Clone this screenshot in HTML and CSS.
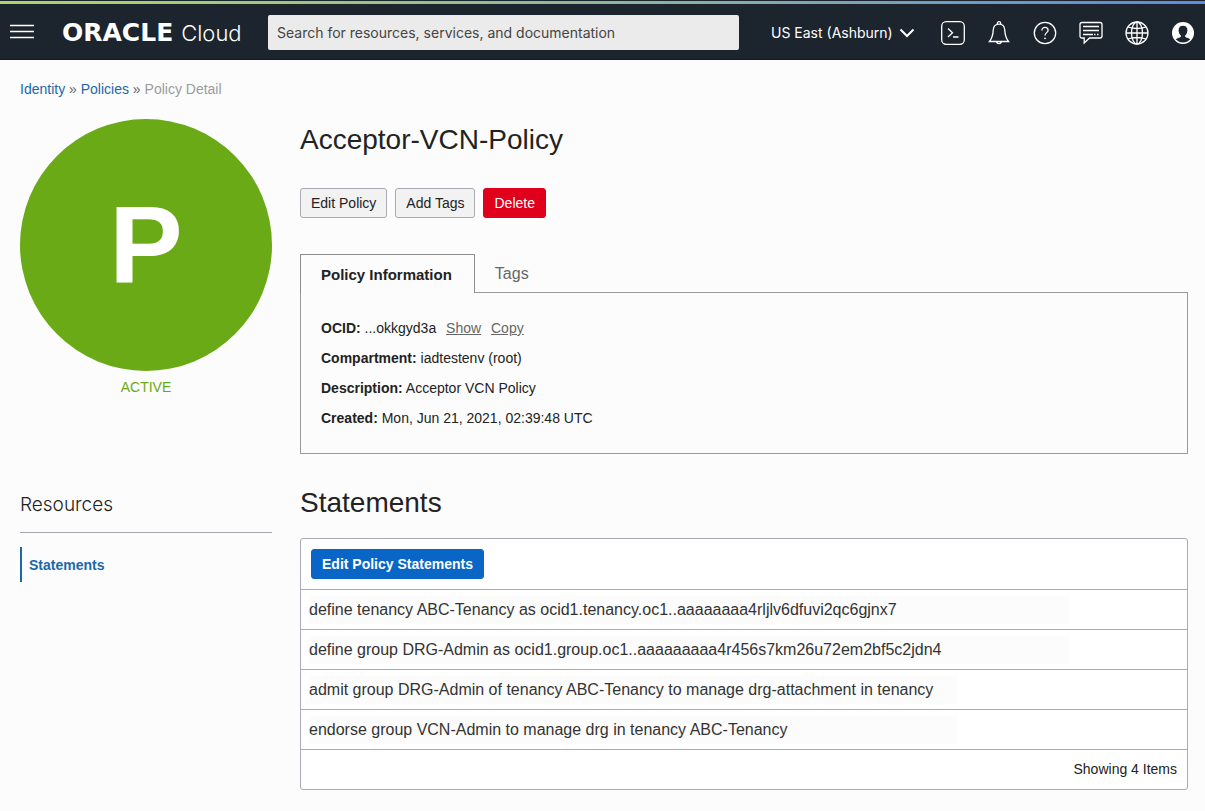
FILE: index.html
```html
<!DOCTYPE html>
<html lang="en">
<head>
    <meta charset="UTF-8">
    <meta name="viewport" content="width=device-width, initial-scale=1.0">
    <title>Policy Detail</title>
    <link rel="stylesheet" href="styles.css">
</head>
<body>
<header class="topbar">
    <button class="icon-button" aria-label="Menu">
        <svg width="24" height="24" viewBox="0 0 24 24"><path d="M0 4.500h24M0 10.500h24M0 16.500h24"/></svg>
    </button>
    <a class="brand" href="#"><span class="brand-name">ORACLE</span><span class="brand-product">Cloud</span></a>
    <input class="search" type="search" aria-label="Search" placeholder="Search for resources, services, and documentation">
    <div class="region">
        <select class="region-select" aria-label="Region">
            <option>US East (Ashburn)</option>
        </select>
        <svg class="chevron" width="16" height="10" viewBox="0 0 16 10"><path d="M1.500 1.500l6.500 6.500 6.500-6.500"/></svg>
    </div>
    <nav class="tools">
        <button class="icon-button" aria-label="Cloud Shell">
            <svg width="24" height="24" viewBox="0 0 24 24"><rect x="0.700" y="0.700" width="22.600" height="22.600" rx="4.500"/><path d="M7 7.500l4.500 4.200L7 16M12 16h5.500"/></svg>
        </button>
        <button class="icon-button" aria-label="Notifications">
            <svg width="24" height="24" viewBox="0 0 24 24"><path d="M10.300 3.200V2.400a1.700 1.700 0 0 1 3.400 0v.8M12 3.200c-3.700 0-5.600 2.600-5.800 6-.2 5-1.200 8-3.700 11.300h19c-2.500-3.300-3.500-6.300-3.700-11.300-.2-3.400-2.100-6-5.800-6zM9.500 20.700a2.600 2.600 0 0 0 5 0"/></svg>
        </button>
        <button class="icon-button" aria-label="Help">
            <svg width="24" height="24" viewBox="0 0 24 24"><circle cx="12" cy="12" r="10.700"/><path d="M8.900 9.400c0-1.900 1.300-3.100 3.100-3.100s3.100 1.200 3.100 2.900c0 2.400-3.100 2.500-3.100 5.300"/><circle class="fill" cx="12" cy="17.300" r="0.900"/></svg>
        </button>
        <button class="icon-button" aria-label="Announcements">
            <svg width="24" height="24" viewBox="0 0 24 24"><path d="M3 1.500h18q2 0 2 2v11.500q0 2-2 2H10.500l-5.300 5v-5H3q-2 0-2-2V3.500q0-2 2-2z"/><path d="M4 5.500h16M4 9.500h16M4 13.500h10M15 13.500h1.500M18 13.500h1.500"/></svg>
        </button>
        <button class="icon-button" aria-label="Language">
            <svg width="24" height="24" viewBox="0 0 24 24"><circle cx="12" cy="12" r="11"/><ellipse cx="12" cy="12" rx="5.500" ry="11"/><path d="M12 1v22M1 12h22M3 6q9 3 18 0M3 18q9-3 18 0"/></svg>
        </button>
        <button class="icon-button" aria-label="Profile">
            <svg width="24" height="24" viewBox="0 0 24 24"><circle class="fill" cx="12" cy="12" r="11"/><path class="cutout" d="M12 4.200c3 0 4.900 2.200 4.900 5 0 2.300-.9 4-2.200 5.100v1.500c2 .6 3.700 1.300 4.800 2.500C17.800 20.700 15 22 12 22s-5.800-1.300-7.500-3.700c1.100-1.200 2.800-1.900 4.800-2.500v-1.500C8 13.200 7.100 11.500 7.100 9.200c0-2.800 1.900-5 4.900-5z"/></svg>
        </button>
    </nav>
</header>

<main class="page">
    <nav class="breadcrumb"><a href="#">Identity</a> » <a href="#">Policies</a> » <span class="current">Policy Detail</span></nav>

    <div class="layout">
        <aside class="sidebar">
            <div class="badge">P</div>
            <div class="status">ACTIVE</div>
            <h2 class="sidebar-title">Resources</h2>
            <a class="sidebar-link" href="#statements">Statements</a>
        </aside>

        <div class="content">
            <h1>Acceptor-VCN-Policy</h1>
            <div class="actions">
                <button class="btn">Edit Policy</button>
                <button class="btn">Add Tags</button>
                <button class="btn btn-danger">Delete</button>
            </div>

            <div class="tabs" role="tablist">
                <button class="tab active" role="tab" aria-selected="true">Policy Information</button>
                <button class="tab" role="tab" aria-selected="false">Tags</button>
            </div>
            <div class="panel">
                <p><strong>OCID:</strong> ...okkgyd3a <a href="#">Show</a> <a href="#">Copy</a></p>
                <p><strong>Compartment:</strong> iadtestenv (root)</p>
                <p><strong>Description:</strong> Acceptor VCN Policy</p>
                <p><strong>Created:</strong> Mon, Jun 21, 2021, 02:39:48 UTC</p>
            </div>

            <h2 class="section-title" id="statements">Statements</h2>
            <div class="card">
                <div class="card-toolbar">
                    <button class="btn btn-primary">Edit Policy Statements</button>
                </div>
                <table class="statements" aria-labelledby="statements">
                    <tbody>
                        <tr><td><span class="statement long">define tenancy ABC-Tenancy as ocid1.tenancy.oc1..aaaaaaaa4rljlv6dfuvi2qc6gjnx7</span></td></tr>
                        <tr><td><span class="statement long">define group DRG-Admin as ocid1.group.oc1..aaaaaaaaa4r456s7km26u72em2bf5c2jdn4</span></td></tr>
                        <tr><td><span class="statement">admit group DRG-Admin of tenancy ABC-Tenancy to manage drg-attachment in tenancy</span></td></tr>
                        <tr><td><span class="statement">endorse group VCN-Admin to manage drg in tenancy ABC-Tenancy</span></td></tr>
                    </tbody>
                </table>
                <div class="card-footer">Showing 4 Items</div>
            </div>
        </div>
    </div>
</main>
</body>
</html>
```
FILE: styles.css
```css
* {
  box-sizing: border-box;
}

body {
  margin: 0;
  background-color: #fcfcfc;
  color: #222;
  font-family: "Liberation Sans", Arial, sans-serif;
  font-size: 14px;
  line-height: 20px;
}

h1, h2, p {
  margin: 0;
  font-weight: normal;
}

button, input, select {
  font-family: inherit;
  font-size: 14px;
}

/* Top bar */
.topbar {
  display: flex;
  align-items: center;
  height: 60px;
  padding: 6px 10px 0;
  background: linear-gradient(90deg, #add66b, #8fb79a 50%, #6089dc) 0 1px / 100% 3px no-repeat, #1c242d;
  border-bottom: 1px solid #151c24;
  color: white;
  font-family: Inter, sans-serif;
}

.icon-button {
  display: block;
  width: 24px;
  height: 24px;
  padding: 0;
  background: none;
  border: none;
  cursor: pointer;
}

.topbar svg {
  display: block;
  fill: none;
  stroke: white;
  stroke-width: 1.3;
}

.topbar .fill {
  fill: white;
  stroke: none;
}

.topbar .cutout {
  fill: #1c242d;
  stroke: white;
  stroke-width: 1;
}

.brand {
  display: flex;
  align-items: center;
  gap: 8px;
  width: 206px;
  margin-left: 28px;
  color: white;
  text-decoration: none;
}

.brand-name {
  font-family: "DejaVu Sans", sans-serif;
  font-size: 25px;
  font-weight: bold;
}

.brand-product {
  font-size: 22px;
  font-weight: 300;
}

.search {
  flex: 1;
  min-width: 0;
  height: 35px;
  padding: 0 9px;
  background-color: #ebebeb;
  border: none;
  border-radius: 2px;
}

.search::placeholder {
  color: #444;
}

.region {
  display: flex;
  align-items: center;
  gap: 6px;
  margin-left: 32px;
}

.region-select {
  appearance: none;
  padding: 0;
  background: none;
  border: none;
  color: white;
}

.topbar .chevron {
  stroke-width: 2;
}

.tools {
  display: flex;
  gap: 22px;
  margin-left: 26px;
}

/* Page */
.page {
  padding: 19px 17px 20px 20px;
}

.breadcrumb {
  color: #666;
}

.breadcrumb a {
  color: #1b68a8;
  text-decoration: none;
}

.breadcrumb .current {
  color: #9b9b9b;
}

.layout {
  display: grid;
  grid-template-columns: 252px 1fr;
  gap: 28px;
  margin-top: 20px;
}

.badge {
  display: flex;
  align-items: center;
  justify-content: center;
  aspect-ratio: 1;
  background-color: #6aaa17;
  border-radius: 50%;
  color: white;
  font-size: 110px;
  font-weight: bold;
}

.status {
  margin-top: 6px;
  color: #6aaa17;
  text-align: center;
}

.sidebar-title {
  margin-top: 98px;
  padding-bottom: 17px;
  border-bottom: 1px solid #a5a8b0;
  font-family: Inter, sans-serif;
  font-size: 19px;
  font-weight: 300;
}

.sidebar-link {
  display: block;
  margin-top: 14px;
  padding: 8px 7px 7px;
  border-left: 2px solid #1b68a8;
  color: #1b68a8;
  font-weight: bold;
  text-decoration: none;
}

h1, .section-title {
  font-size: 28px;
  line-height: 42px;
}

.actions {
  display: flex;
  gap: 8px;
  margin-top: 27px;
}

.btn {
  height: 30px;
  padding: 0 10px;
  background-color: #f2f2f3;
  border: 1px solid #a9abb3;
  border-radius: 3px;
  color: #222;
  cursor: pointer;
}

.btn-danger {
  background-color: #e0001b;
  border-color: #e0001b;
  color: white;
}

.btn-primary {
  background-color: #0a66c6;
  border-color: #0a66c6;
  color: white;
  font-weight: bold;
}

/* Tabs sit on the top border of the panel */
.tabs {
  display: flex;
  margin-top: 36px;
}

.tab {
  height: 39px;
  padding: 0 20px;
  background: none;
  border: none;
  color: #666;
  font-size: 16px;
  cursor: pointer;
}

.tab.active {
  position: relative;
  padding-right: 22px;
  background-color: #fcfcfc;
  border: 1px solid #8c8c8c;
  border-bottom: none;
  color: #222;
  font-size: 15px;
  font-weight: bold;
}

.panel {
  margin-top: -1px;
  padding: 20px;
  border: 1px solid #9b9b9b;
  line-height: 30px;
}

.panel a {
  margin-left: 6px;
  color: #666;
}

.section-title {
  margin-top: 28px;
}

.card {
  margin-top: 14px;
  background-color: white;
  border: 1px solid #a9abb3;
  border-radius: 3px;
}

.card-toolbar {
  padding: 10px;
}

.statements {
  width: 100%;
  border-collapse: collapse;
  border-bottom: 1px solid #a9abb3;
}

.statements td {
  height: 40px;
  padding: 0 8px;
  border-top: 1px solid #a9abb3;
}

.statement {
  display: block;
  max-width: 648px;
  background-color: #fcfcfc;
  color: #333;
  font-size: 16px;
  line-height: 28px;
}

.statement.long {
  max-width: 760px;
}

.card-footer {
  padding: 9px 10px 10px;
  text-align: right;
}
```
